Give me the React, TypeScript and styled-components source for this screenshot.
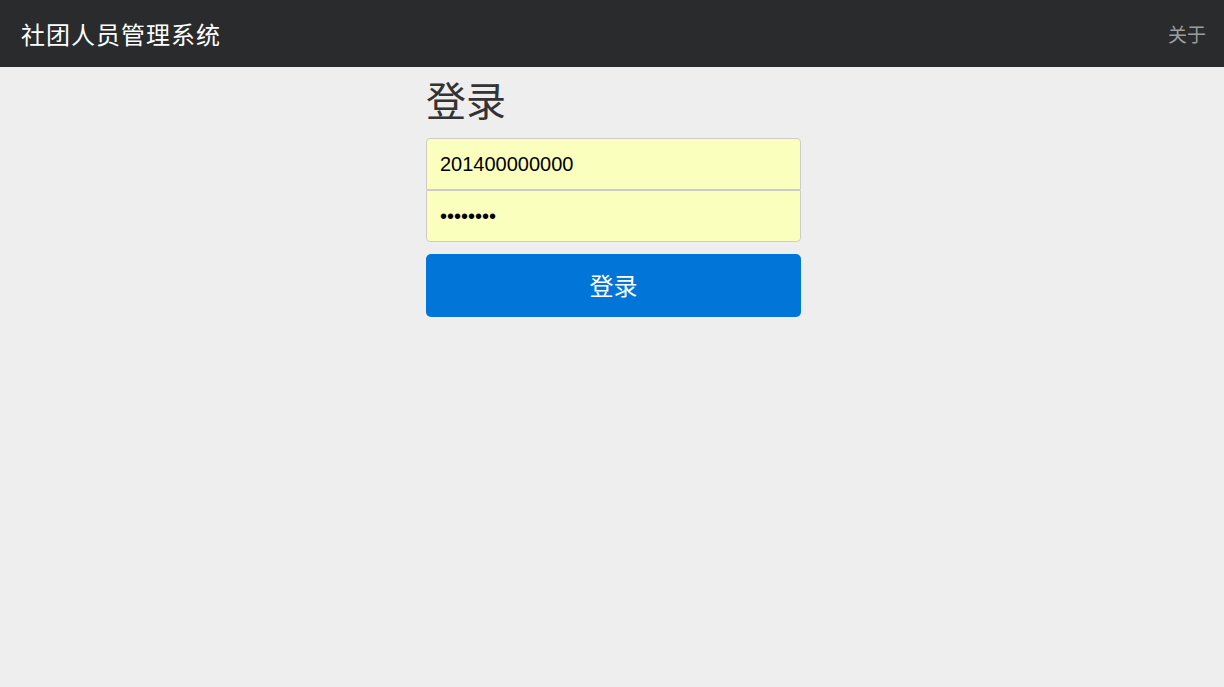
import React from "react";
import styled, { createGlobalStyle } from "styled-components";

const GlobalStyle = createGlobalStyle`
  html, body {
    margin: 0;
    padding: 0;
    background: #eeeeee;
    font-family: "Liberation Sans", "Noto Sans CJK SC", sans-serif;
  }
  * {
    box-sizing: border-box;
  }
`;

const Navbar = styled.nav`
  height: 67px;
  background: #292b2c;
  display: flex;
  align-items: center;
  justify-content: space-between;
  padding: 0 18px 0 21px;
`;

const Brand = styled.a`
  color: #ffffff;
  font-size: 24px;
  text-decoration: none;
  letter-spacing: 1px;
`;

const NavLink = styled.a`
  color: #9d9d9d;
  font-size: 19px;
  text-decoration: none;
`;

const Main = styled.main`
  display: flex;
  justify-content: center;
  padding-left: 3px;
`;

const SigninForm = styled.form`
  width: 375px;
  display: flex;
  flex-direction: column;
`;

const Heading = styled.h2`
  margin: 13px 0 14px;
  font-size: 40px;
  font-weight: 400;
  line-height: 44px;
  color: #333333;
`;

const Input = styled.input<{ $pos: "top" | "bottom" }>`
  height: 52px;
  width: 100%;
  padding: 0 13px;
  font-size: 20px;
  font-family: "Liberation Sans", sans-serif;
  color: #000000;
  background: #faffbd;
  border: 1px solid #cccccc;
  border-radius: ${(p) => (p.$pos === "top" ? "4px 4px 0 0" : "0 0 4px 4px")};
  margin-bottom: ${(p) => (p.$pos === "top" ? "0" : "12px")};
  outline: none;
`;

const SubmitButton = styled.button`
  height: 63px;
  width: 100%;
  border: none;
  border-radius: 5px;
  background: #0275d8;
  color: #ffffff;
  font-size: 24px;
  font-family: "Liberation Sans", "Noto Sans CJK SC", sans-serif;
  padding: 0 0 3px;
  cursor: pointer;
`;

const App: React.FC = () => {
  return (
    <>
      <GlobalStyle />
      <Navbar>
        <Brand href="#">社团人员管理系统</Brand>
        <NavLink href="#">关于</NavLink>
      </Navbar>
      <Main>
        <SigninForm onSubmit={(e) => e.preventDefault()}>
          <Heading>登录</Heading>
          <Input $pos="top" type="text" defaultValue="201400000000" />
          <Input $pos="bottom" type="password" defaultValue="12345678" />
          <SubmitButton type="submit">登录</SubmitButton>
        </SigninForm>
      </Main>
    </>
  );
};

export default App;
